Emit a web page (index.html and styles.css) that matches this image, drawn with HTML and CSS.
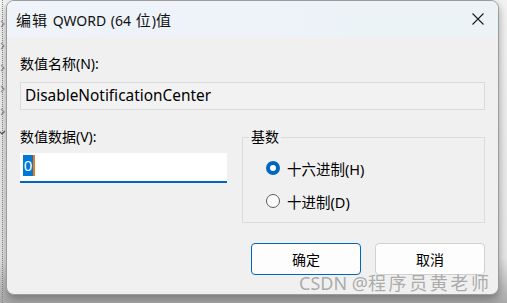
FILE: index.html
```html
<!DOCTYPE html>
<html lang="zh-CN">
<head>
    <meta charset="UTF-8">
    <title>编辑 QWORD (64 位)值</title>
    <link rel="stylesheet" href="styles.css">
</head>
<body>
    <div class="screen">
        <div class="tree-strip">
            <svg width="7" height="303" viewBox="0 0 7 303">
                <line x1="2.5" y1="0" x2="2.5" y2="303" stroke="#8a8a8a" stroke-dasharray="1 1"/>
                <g fill="none" stroke="#9a9a9a" stroke-width="1.2">
                    <polyline points="1,21 4,24 1,27"/>
                    <polyline points="1,43 4,46 1,49"/>
                    <polyline points="1,65 4,68 1,71"/>
                    <polyline points="1,86 4,89 1,92"/>
                    <polyline points="1,109 4,112 1,115"/>
                    <polyline points="-1,131 2,134 5,131" stroke="#555"/>
                </g>
            </svg>
        </div>

        <div class="dialog">
            <div class="titlebar">
                <span class="title"><span class="cj">编辑</span> QWORD (64 <span class="cj">位</span>)<span class="cj">值</span></span>
                <svg class="close" width="12" height="12" viewBox="0 0 12 12">
                    <path d="M0.5 0.5 L11.5 11.5 M11.5 0.5 L0.5 11.5" stroke="#1b1b1b" stroke-width="1.1"/>
                </svg>
            </div>

            <div class="content">
                <div class="label first">数值名称(N):</div>
                <div class="name-field">DisableNotificationCenter</div>

                <div class="row">
                    <div class="data-col">
                        <div class="label">数值数据(V):</div>
                        <div class="value-field"><span class="selected">0</span><span class="caret"></span></div>
                    </div>
                    <fieldset class="base-group">
                        <legend>基数</legend>
                        <div class="radio">
                            <span class="dot checked"></span>
                            <span>十六进制(H)</span>
                        </div>
                        <div class="radio">
                            <span class="dot"></span>
                            <span>十进制(D)</span>
                        </div>
                    </fieldset>
                </div>

                <div class="buttons">
                    <div class="button primary">确定</div>
                    <div class="button">取消</div>
                </div>
            </div>

            <div class="watermark">CSDN @<span class="wm-cjk">程序员黄老师</span></div>
        </div>
    </div>
</body>
</html>
```

FILE: styles.css
```css
body {
    margin: 0;
    font-family: "Noto Sans", "Noto Sans CJK SC", sans-serif;
    font-size: 14px;
    color: #000;
}
.screen {
    width: 507px;
    height: 303px;
    display: flex;
    align-items: flex-start;
    background: linear-gradient(#f4f4f4 0%, #e8e8e8 85%, #a9a9a9 100%);
    overflow: hidden;
}
.tree-strip {
    width: 6px;
    height: 303px;
    flex: none;
}
.tree-strip svg {
    display: block;
}
.dialog {
    position: relative;
    width: 493px;
    height: 295px;
    box-sizing: border-box;
    border: 1px solid #9c9c9c;
    border-radius: 8px;
    background: #f0f0f0;
    overflow: hidden;
    box-shadow: 0 4px 10px rgba(0,0,0,0.35);
    flex: none;
}
.titlebar {
    height: 36px;
    display: flex;
    align-items: center;
    justify-content: space-between;
    padding: 0 14px 0 9px;
    background: linear-gradient(90deg, #eff3fa, #ebf3f6);
}
.title {
    font-size: 14px;
    word-spacing: 1px;
    color: #111;
}
.title .cj {
    font-size: 15px;
    letter-spacing: 1px;
}
.content {
    padding: 0 13px 0 13px;
}
.label {
    line-height: 20px;
    height: 20px;
}
.label.first {
    margin-top: 17px;
}
.name-field {
    margin-top: 8px;
    height: 28px;
    box-sizing: border-box;
    border: 1px solid #dadada;
    background: #f2f2f2;
    padding-left: 4px;
    line-height: 25px;
    font-size: 15.4px;
}
.row {
    display: flex;
    gap: 15px;
    margin-top: 17px;
}
.data-col {
    width: 207px;
    flex: none;
}
.value-field {
    margin-top: 6px;
    height: 30px;
    box-sizing: border-box;
    background: #fff;
    border-bottom: 2px solid #0067c0;
    padding: 2px 0 0 3px;
    display: flex;
    align-items: flex-start;
}
.selected {
    background: #0078d7;
    color: #fff;
    width: 10px;
    height: 21px;
    line-height: 21px;
    font-size: 15px;
    text-align: center;
}
.caret {
    width: 2px;
    height: 21px;
    background: #f07a10;
}
.base-group {
    flex: 1;
    margin: 0;
    padding: 11px 0 0 6px;
    height: 96px;
    box-sizing: border-box;
    border: 1px solid #dcdcdc;
    min-width: 0;
}
.base-group legend {
    padding: 0 2px;
    line-height: 20px;
}
.radio {
    display: flex;
    align-items: center;
    gap: 7px;
    height: 20px;
    margin: 0 0 13px 17px;
    font-size: 14.5px;
}
.dot {
    width: 14px;
    height: 14px;
    box-sizing: border-box;
    border-radius: 50%;
    border: 1px solid #5c5c5c;
    background: #fbfbfb;
    flex: none;
}
.dot.checked {
    border: 4px solid #0067c0;
    background: #fff;
}
.buttons {
    display: flex;
    justify-content: flex-end;
    gap: 14px;
    margin-top: 20px;
}
.button {
    width: 110px;
    height: 32px;
    box-sizing: border-box;
    border: 1px solid #d0d0d0;
    border-radius: 4px;
    background: #fdfdfd;
    display: flex;
    align-items: center;
    justify-content: center;
}
.button.primary {
    border-color: #0067c0;
}
.watermark {
    position: absolute;
    left: 292px;
    top: 268px;
    font-size: 18px;
    color: rgba(140,140,140,0.7);
    white-space: nowrap;
}
.wm-cjk {
    letter-spacing: 2.6px;
}
```
